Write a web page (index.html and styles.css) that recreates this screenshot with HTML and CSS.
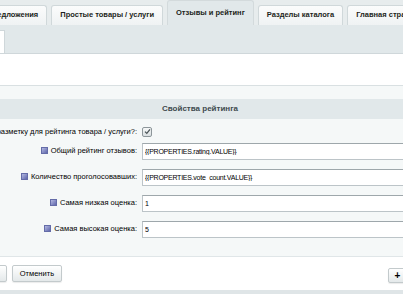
FILE: index.html
```html
<!DOCTYPE html>
<html lang="ru">
<head>
    <meta charset="UTF-8">
    <meta name="viewport" content="width=device-width, initial-scale=1.0">
    <title>Отзывы и рейтинг</title>
    <link rel="stylesheet" href="styles.css">
</head>
<body>
    <div class="page">
        <div class="tabs">
            <div class="tab tab-first">Торговые предложения</div>
            <div class="tab">Простые товары / услуги</div>
            <div class="tab tab-active">Отзывы и рейтинг</div>
            <div class="tab">Разделы каталога</div>
            <div class="tab">Главная страница</div>
        </div>
        <div class="subbar">
            <div class="subtab"></div>
        </div>
        <div class="blank"></div>

        <div class="section">
            <div class="section-title">Свойства рейтинга</div>
            <div class="rows">
                <div class="row row-check">
                    <div class="label">Использовать разметку для рейтинга товара / услуги?:</div>
                    <div class="field">
                        <span class="checkbox">
                            <svg width="7" height="7" viewBox="0 0 7 7"><path d="M1 3.6 L2.8 5.4 L6 1.4" fill="none" stroke="#4a5357" stroke-width="1.3"/></svg>
                        </span>
                    </div>
                </div>
                <div class="row">
                    <div class="label"><span class="hint"></span>Общий рейтинг отзывов:</div>
                    <div class="field"><input class="text" type="text" value="{{PROPERTIES.rating.VALUE}}"></div>
                </div>
                <div class="row">
                    <div class="label"><span class="hint"></span>Количество проголосовавших:</div>
                    <div class="field"><input class="text" type="text" value="{{PROPERTIES.vote_count.VALUE}}"></div>
                </div>
                <div class="row">
                    <div class="label"><span class="hint"></span>Самая низкая оценка:</div>
                    <div class="field"><input class="text" type="text" value="1"></div>
                </div>
                <div class="row">
                    <div class="label"><span class="hint"></span>Самая высокая оценка:</div>
                    <div class="field"><input class="text" type="text" value="5"></div>
                </div>
            </div>
        </div>

        <div class="buttons">
            <button class="btn btn-first">Применить</button>
            <button class="btn">Отменить</button>
            <button class="btn btn-plus">+</button>
        </div>
        <div class="footer"></div>
    </div>
</body>
</html>
```

FILE: styles.css
```css
body {
    margin: 0;
    padding: 0;
    overflow: hidden;
    font-family: "Liberation Sans", Arial, sans-serif;
    font-size: 7.5px;
    color: #000;
    background-color: #fff;
}

.page {
    width: 420px;
}

/* вкладки */
.tabs {
    display: flex;
    align-items: flex-end;
    gap: 4px;
    height: 25px;
    margin-left: -59px;
    background-color: #e7eced;
}

.tab {
    flex-shrink: 0;
    height: 19px;
    padding: 0 8px;
    line-height: 18px;
    font-weight: bold;
    white-space: nowrap;
    color: #1c1f20;
    background: linear-gradient(#fbfcfc, #eff2f3);
    border: 1px solid #d0d8da;
    border-bottom: none;
    border-radius: 3px 3px 0 0;
}

.tab-active {
    height: 24px;
    line-height: 24px;
    background: #e1e8ea;
    border-color: #d3dadc;
}

.subbar {
    height: 28px;
    display: flex;
    align-items: flex-end;
    background-color: #e1e8ea;
    border-bottom: 1px solid #cfd7da;
}

.subtab {
    width: 4px;
    height: 22px;
    background-color: #fff;
    border-top: 1px solid #cfd7da;
    border-right: 1px solid #cfd7da;
}

.blank {
    height: 31px;
    border-bottom: 1px solid #d9e0e2;
}

/* форма */
.section {
    padding-top: 13px;
    background-color: #f5f8f8;
}

.section-title {
    height: 20px;
    line-height: 20px;
    padding-right: 20px;
    text-align: center;
    font-size: 8px;
    font-weight: bold;
    color: #3e4a4e;
    background-color: #e1e8ea;
}

.rows {
    display: flex;
    flex-direction: column;
    padding: 4px 0 18px;
}

.row {
    display: flex;
    align-items: center;
    gap: 5px;
    height: 17px;
}

.row + .row {
    margin-top: 9px;
}

.row-check + .row {
    margin-top: 3px;
}

.label {
    width: 137px;
    flex-shrink: 0;
    display: flex;
    justify-content: flex-end;
    align-items: center;
    gap: 3px;
    padding-bottom: 3px;
    white-space: nowrap;
}

.row-check .label {
    padding-bottom: 0;
}

.field {
    flex: 1;
    display: flex;
    align-items: center;
}

.hint {
    flex-shrink: 0;
    width: 5px;
    height: 5px;
    background: linear-gradient(135deg, #b4b9e2, #5f67ab);
    border: 1px solid #646ca8;
}

.checkbox {
    display: flex;
    align-items: center;
    justify-content: center;
    width: 8px;
    height: 8px;
    border: 1px solid #8d969a;
    border-radius: 2px;
    background: linear-gradient(#f6f8f8, #d9dfe1);
}

.text {
    box-sizing: border-box;
    width: 100%;
    height: 17px;
    margin: 0;
    padding: 0 2px;
    font-family: inherit;
    font-size: 7px;
    letter-spacing: -0.25px;
    line-height: 13px;
    color: #000;
    background-color: #fff;
    border: 1px solid #bcc4c8;
    border-top-color: #9ea7ab;
    border-radius: 0;
    outline: none;
}

/* кнопки */
.buttons {
    display: flex;
    align-items: center;
    gap: 5px;
    height: 33px;
    padding-right: 13px;
    border-top: 1px solid #e0e6e8;
    background-color: #fff;
}

.btn {
    height: 17px;
    padding: 0 7px;
    font-family: inherit;
    font-size: 7.5px;
    color: #000;
    background: linear-gradient(#ffffff, #e4e9ea);
    border: 1px solid #c3cacc;
    border-radius: 2px;
    box-shadow: 0 1px 1px rgba(0, 0, 0, 0.08);
}

.btn-first {
    margin-left: -48px;
}

.btn-plus {
    margin-left: auto;
    margin-top: 4px;
    height: 15px;
    width: 19px;
    padding: 0;
    font-weight: bold;
    font-size: 10px;
    line-height: 12px;
}

.footer {
    height: 4px;
    background-color: #dfe5e7;
}
```
